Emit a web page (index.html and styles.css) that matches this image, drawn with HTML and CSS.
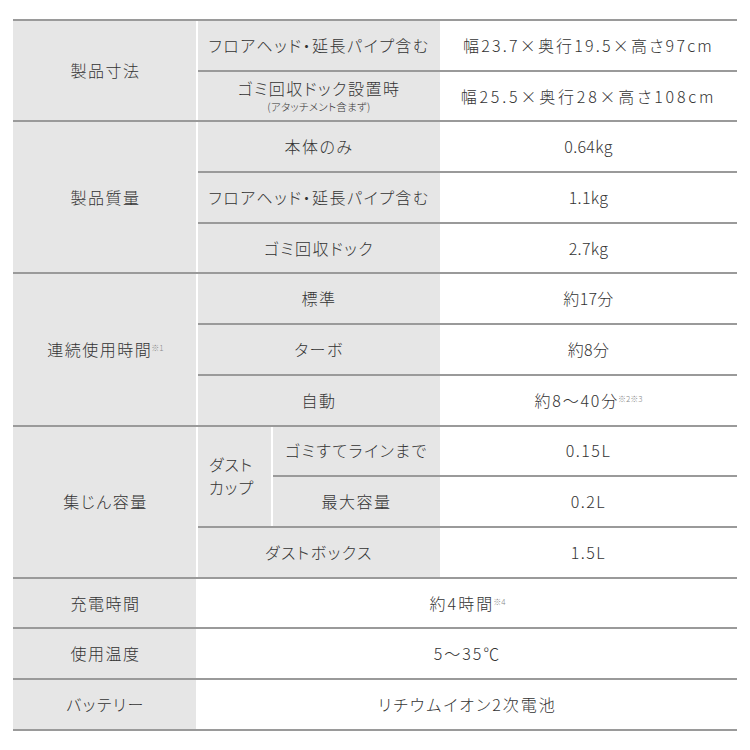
FILE: index.html
```html
<!DOCTYPE html>
<html lang="ja">
<head>
<meta charset="utf-8">
<link rel="stylesheet" href="styles.css">
</head>
<body>
<div class="spec">
  <div class="group">
    <div class="cell head rows2">製品寸法</div>
    <div class="cell sub">フロアヘッド・延長パイプ含む</div>
    <div class="cell val sp1">幅23.7×奥行19.5×高さ97cm</div>
    <div class="cell sub stack"><span>ゴミ回収ドック設置時</span><span class="small">(アタッチメント含まず)</span></div>
    <div class="cell val sp2">幅25.5×奥行28×高さ108cm</div>
  </div>
  <div class="group">
    <div class="cell head rows3">製品質量</div>
    <div class="cell sub">本体のみ</div>
    <div class="cell val">0.64kg</div>
    <div class="cell sub">フロアヘッド・延長パイプ含む</div>
    <div class="cell val">1.1kg</div>
    <div class="cell sub">ゴミ回収ドック</div>
    <div class="cell val">2.7kg</div>
  </div>
  <div class="group">
    <div class="cell head rows3"><span>連続使用時間<span class="note">※1</span></span></div>
    <div class="cell sub">標準</div>
    <div class="cell val">約17分</div>
    <div class="cell sub">ターボ</div>
    <div class="cell val">約8分</div>
    <div class="cell sub">自動</div>
    <div class="cell val sp4"><span>約8〜40分<span class="note">※2※3</span></span></div>
  </div>
  <div class="group">
    <div class="cell head rows3">集じん容量</div>
    <div class="cell dust">ダスト<br>カップ</div>
    <div class="cell sub narrow">ゴミすてラインまで</div>
    <div class="cell val sp3">0.15L</div>
    <div class="cell sub narrow">最大容量</div>
    <div class="cell val sp3">0.2L</div>
    <div class="cell sub">ダストボックス</div>
    <div class="cell val sp3">1.5L</div>
  </div>
  <div class="group">
    <div class="cell head">充電時間</div>
    <div class="cell val wide"><span>約4時間<span class="note">※4</span></span></div>
  </div>
  <div class="group">
    <div class="cell head">使用温度</div>
    <div class="cell val wide">5〜35℃</div>
  </div>
  <div class="group">
    <div class="cell head">バッテリー</div>
    <div class="cell val wide">リチウムイオン2次電池</div>
  </div>
</div>
</body>
</html>
```
FILE: styles.css
```css
* { box-sizing: border-box; }
html, body { margin: 0; padding: 0; background: #fff; }
body {
  font-family: "Noto Sans CJK JP", "Noto Sans", sans-serif;
  font-weight: 300;
  color: #333;
  font-size: 16px;
  font-feature-settings: "palt";
  letter-spacing: 1px;
}
.spec {
  margin: 19px 13px 0 13px;
  width: 724px;
  border-bottom: 2px solid #9a9a9a;
}
.group {
  display: grid;
  grid-template-columns: 185px 75px 167px 1fr;
  grid-auto-rows: 50.7px;
}
.cell {
  border-top: 2px solid #9a9a9a;
  display: flex;
  align-items: center;
  justify-content: center;
  text-align: center;
  line-height: 1.3;
  white-space: nowrap;
}
.head {
  grid-column: 1;
  background: #e6e6e6;
  box-shadow: inset -2px 0 0 #fff;
  letter-spacing: 1.5px;
}
.rows2 { grid-row: span 2; }
.rows3 { grid-row: span 3; }
.sub {
  grid-column: 2 / 4;
  background: #e6e6e6;
  letter-spacing: 1.5px;
}
.sub.narrow { grid-column: 3; }
.dust {
  grid-column: 2;
  grid-row: span 2;
  background: #e6e6e6;
  box-shadow: inset -2px 0 0 #fff;
  justify-content: flex-start;
  text-align: left;
  padding-left: 11px;
  line-height: 23px;
}
.val { grid-column: 4; letter-spacing: 0.3px; }
.val.wide { grid-column: 2 / 5; letter-spacing: 2px; }
.stack { flex-direction: column; }
.small { font-size: 10.5px; line-height: 14px; margin-top: 2px; letter-spacing: 0.3px; }
.note {
  font-size: 8px;
  color: #8a8a8a;
  vertical-align: 5px;
  margin-left: -1px;
  letter-spacing: 0;
}
.sp1 { letter-spacing: 2.2px; }
.sp2 { letter-spacing: 2.8px; }
.sp3 { letter-spacing: 1.5px; }
.sp4 { letter-spacing: 1.8px; }
```
